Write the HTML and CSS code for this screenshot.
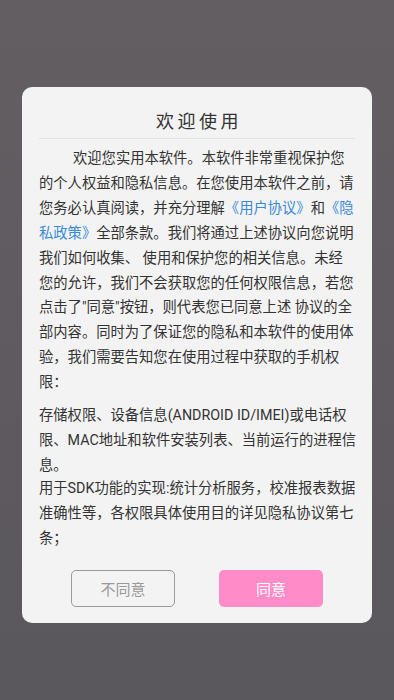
FILE: index.html
```html
<!DOCTYPE html>
<html lang="zh-CN">
<head>
    <meta charset="UTF-8">
    <meta name="viewport" content="width=device-width, initial-scale=1.0">
    <title>欢迎使用</title>
    <link rel="stylesheet" href="styles.css">
</head>
<body>

    <!-- Privacy Dialog -->
    <div class="overlay">
        <div class="dialog">
            <h2 class="dialog-title">欢迎使用</h2>
            <div class="dialog-content">
                <p class="first">欢迎您实用本软件。本软件非常重视保护您<br>的个人权益和隐私信息。在您使用本软件之前，请<br>您务必认真阅读，并充分理解<a href="#">《用户协议》</a>和<a href="#">《隐<br>私政策》</a>全部条款。我们将通过上述协议向您说明<br>我们如何收集、 使用和保护您的相关信息。未经<br>您的允许，我们不会获取您的任何权限信息，若您<br>点击了"同意"按钮，则代表您已同意上述 协议的全<br>部内容。同时为了保证您的隐私和本软件的使用体<br>验，我们需要告知您在使用过程中获取的手机权<br>限：</p>
                <p class="perm">存储权限、设备信息(ANDROID ID/IMEI)或电话权<br>限、MAC地址和软件安装列表、当前运行的进程信<br>息。</p>
                <p class="usage">用于SDK功能的实现:统计分析服务，校准报表数据<br>准确性等，各权限具体使用目的详见隐私协议第七<br>条；</p>
            </div>
            <div class="dialog-buttons">
                <button class="btn btn-cancel">不同意</button>
                <button class="btn btn-ok">同意</button>
            </div>
        </div>
    </div>

</body>
</html>
```

FILE: styles.css
```css
/* Global Styles */
body {
    margin: 0;
    padding: 0;
    font-family: Roboto, "Noto Sans CJK SC", sans-serif;
    height: 100vh;
    overflow: hidden;
}

/* Dimmed Background */
.overlay {
    height: 100%;
    background: linear-gradient(to bottom, #635e62, #5a575d);
    display: flex;
    justify-content: center;
    padding-top: 87px;
    box-sizing: border-box;
}

/* Dialog Box */
.dialog {
    background: #f3f3f3;
    width: 350px;
    height: 536px;
    border-radius: 10px;
    padding: 23px 17px 0 17px;
    box-sizing: border-box;
    display: flex;
    flex-direction: column;
}

.dialog-title {
    margin: 0;
    font-size: 18px;
    line-height: 24px;
    font-weight: normal;
    color: #333;
    text-align: center;
    letter-spacing: 3.5px;
    padding: 0 0 4px 4px;
    border-bottom: 1px solid #e2e2e2;
}

.dialog-content {
    margin-top: 7px;
    font-size: 14.3px;
    line-height: 24.9px;
    color: #333;
    white-space: nowrap;
}

.dialog-content p {
    margin: 0;
}

.dialog-content .first {
    text-indent: 34px;
}

.dialog-content .perm {
    margin-top: 8px;
}

.dialog-content .usage {
    margin-top: -2px;
}

.dialog-content a {
    color: #3a8ad6;
    text-decoration: none;
}

/* Buttons */
.dialog-buttons {
    display: flex;
    justify-content: center;
    gap: 44px;
    margin-top: 19px;
}

.btn {
    width: 104px;
    height: 37px;
    border-radius: 5px;
    font-family: Roboto, "Noto Sans CJK SC", sans-serif;
    font-size: 15px;
    cursor: pointer;
}

.btn-cancel {
    background: #f3f3f3;
    border: 1px solid #9a9a9a;
    color: #9a9a9a;
}

.btn-ok {
    background: #ff8bc9;
    border: none;
    color: #fff;
}
```
